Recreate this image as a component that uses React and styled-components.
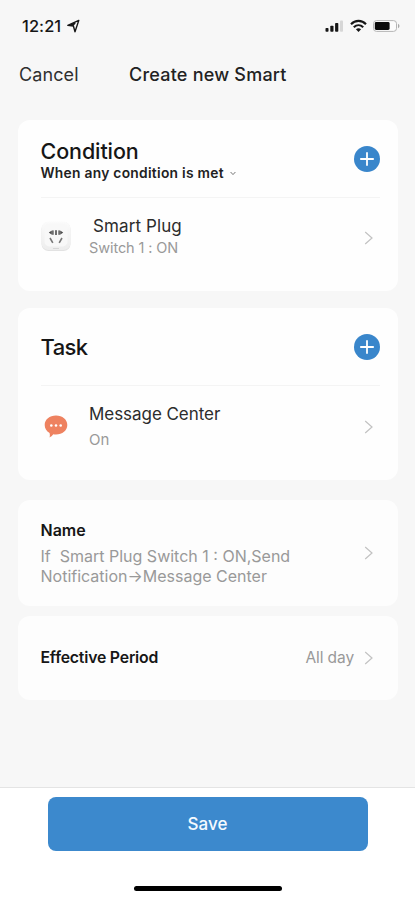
import React from "react";
import styled, { createGlobalStyle } from "styled-components";

const Chevron = () => (
  <ChevronIcon width="10" height="14" viewBox="0 0 10 14" fill="none">
    <path d="M1.2 1 L8 7 L1.2 13" stroke="#c2c2c2" strokeWidth="1.2" />
  </ChevronIcon>
);

const AddButton = () => (
  <Add aria-label="Add">
    <svg width="26" height="26" viewBox="0 0 26 26" fill="none">
      <path d="M13 6.2v13.6M6.2 13h13.6" stroke="#fff" strokeWidth="1.8" />
    </svg>
  </Add>
);

const StatusIcons = () => (
  <svg width="76" height="16" viewBox="0 0 76 16">
    <g fill="#161616">
      <rect x="0.5" y="10" width="3" height="3.8" rx="0.8" />
      <rect x="5.3" y="7.8" width="3.2" height="6" rx="0.8" />
      <rect x="10.1" y="5" width="3.2" height="8.8" rx="0.8" />
    </g>
    <rect x="15" y="2.5" width="3" height="11.3" rx="0.8" fill="#d6d6d6" />
    <g fill="none" stroke="#161616" strokeWidth="2.1">
      <path d="M26 6.2 C30.2 1.8 36.8 1.8 41 6.2" />
      <path d="M28.8 9.3 C31.6 6.5 35.4 6.5 38.2 9.3" />
    </g>
    <path d="M30.9 11.2 C32.4 9.8 34.6 9.8 36.1 11.2 L33.5 14 Z" fill="#161616" />
    <rect
      x="48.5"
      y="2.6"
      width="23"
      height="10.8"
      rx="3"
      fill="#fcfcfc"
      stroke="#b5b5b5"
    />
    <rect x="49.8" y="4" width="14.8" height="8" rx="1.4" fill="#0a0a0a" />
    <path d="M73 5.8 C75 6.7 75 9.3 73 10.2 Z" fill="#a8a8a8" />
  </svg>
);

const PlugIcon = () => (
  <svg width="32" height="32" viewBox="0 0 32 32">
    <defs>
      <linearGradient id="plug" x1="0" y1="0" x2="0" y2="1">
        <stop offset="0" stopColor="#fbfbfb" />
        <stop offset="1" stopColor="#ededed" />
      </linearGradient>
    </defs>
    <rect x="0.5" y="2" width="29" height="29" rx="7" fill="#e2e2e2" />
    <rect x="0.5" y="1.5" width="29" height="28.5" rx="7" fill="url(#plug)" />
    <rect x="3.5" y="3.5" width="23" height="23" rx="5" fill="#f8f8f8" />
    <g fill="#4c4c4c">
      <path d="M7.8 12.6 L10.8 10.4 V14.8 Z" />
      <rect x="11.2" y="10.4" width="1.4" height="4.4" />
      <rect x="14.2" y="10.2" width="1.6" height="4.8" />
      <rect x="17.4" y="10.4" width="1.4" height="4.4" />
      <path d="M22.2 12.6 L19.2 10.4 V14.8 Z" />
    </g>
    <path
      d="M9 18 L11.8 22.8 M21 18 L18.2 22.8"
      stroke="#777"
      strokeWidth="1.6"
    />
    <path d="M12 28.5h6" stroke="#cfcfcf" strokeWidth="0.8" />
  </svg>
);

const MessageIcon = () => (
  <svg width="32" height="32" viewBox="0 0 32 32">
    <path
      d="M15 4.5 C21.4 4.5 26.3 8.5 26.3 14 C26.3 19.5 21.4 23.5 15 23.5 C14 23.5 13.2 23.4 12.3 23.2 C11.2 24.7 10 25.7 8.6 26.4 C9 24.8 9 23.3 8.6 21.9 C5.4 20.2 3.7 17.4 3.7 14 C3.7 8.5 8.6 4.5 15 4.5 Z"
      fill="#ee8260"
    />
    <g fill="#fff">
      <circle cx="10.3" cy="14.5" r="1.3" />
      <circle cx="15" cy="14.5" r="1.3" />
      <circle cx="19.7" cy="14.5" r="1.3" />
    </g>
  </svg>
);

function App() {
  return (
    <>
      <GlobalStyle />
      <Screen>
        <StatusBar>
          <Clock>
            <Text $size={16.4} $weight={500} $spacing={0.1}>
              12:21
            </Text>
            <svg width="14" height="14" viewBox="0 0 14 14">
              <path
                d="M12.8 1.4 L9 12.8 L7.4 7 L1.8 6.4 Z"
                fill="none"
                stroke="#161616"
                strokeWidth="1.4"
                strokeLinejoin="round"
              />
              <path d="M7.4 7 L1.8 6.4 L9 3.2 L9.6 4.6 Z" fill="#161616" />
            </svg>
          </Clock>
          <StatusIcons />
        </StatusBar>

        <NavBar>
          <Text $size={18} $spacing={0.1} $color="#303030">
            Cancel
          </Text>
          <Title $size={18} $weight={500} $spacing={0.22} $color="#222">
            Create new Smart
          </Title>
        </NavBar>

        <Content>
          <Card $height={171}>
            <CardHeader $height={77} $top={1}>
              <Heading>
                <Text
                  as="h2"
                  $size={21.5}
                  $weight={500}
                  $line={24}
                  $spacing={-0.1}
                >
                  Condition
                </Text>
                <Match>
                  <Text
                    $size={13.8}
                    $weight={600}
                    $line={20}
                    $spacing={0.28}
                    $color="#222"
                  >
                    When any condition is met
                  </Text>
                  <svg width="6" height="5" viewBox="0 0 6 5" fill="none">
                    <path d="M0.6 1 L3 3.6 L5.4 1" stroke="#777" />
                  </svg>
                </Match>
              </Heading>
              <AddButton />
            </CardHeader>
            <Item $top={16}>
              <IconBox>
                <PlugIcon />
              </IconBox>
              <ItemBody>
                <ItemName $indent={4} $size={17} $line={24} $spacing={0.1}>
                  Smart Plug
                </ItemName>
                <Text $size={14.5} $line={20} $color="#999" $spacing={-0.1}>
                  Switch 1 : ON
                </Text>
              </ItemBody>
              <ChevronSlot $drop={4}>
                <Chevron />
              </ChevronSlot>
            </Item>
          </Card>

          <Card $height={172} $top={17}>
            <CardHeader $height={77} $top={1}>
              <Text
                as="h2"
                $size={22}
                $weight={500}
                $line={26}
                $spacing={-0.6}
              >
                Task
              </Text>
              <AddButton />
            </CardHeader>
            <Item $top={15}>
              <IconBox>
                <MessageIcon />
              </IconBox>
              <ItemBody>
                <ItemName $size={17} $line={26} $spacing={-0.05}>
                  Message Center
                </ItemName>
                <Text $size={15} $line={26} $color="#999">
                  On
                </Text>
              </ItemBody>
              <Chevron />
            </Item>
          </Card>

          <RowCard $height={106} $top={20}>
            <div>
              <Text as="h3" $size={16} $weight={600} $line={20}>
                Name
              </Text>
              <Summary $size={16} $line={20} $color="#999">
                {"If  Smart Plug Switch 1 : ON,Send\nNotification→Message Center"}
              </Summary>
            </div>
            <Chevron />
          </RowCard>

          <RowCard $height={84} $top={10}>
            <Text
              as="h3"
              $size={15.8}
              $weight={600}
              $line={20}
              $spacing={-0.2}
            >
              Effective Period
            </Text>
            <Value>
              <Text $size={15.5} $line={20} $color="#999" $spacing={-0.1}>
                All day
              </Text>
              <Chevron />
            </Value>
          </RowCard>
        </Content>

        <Footer>
          <SaveButton>Save</SaveButton>
          <HomeIndicator />
        </Footer>
      </Screen>
    </>
  );
}

export default App;

const GlobalStyle = createGlobalStyle`
  * {
    box-sizing: border-box;
  }
  body {
    margin: 0;
    background: #f7f7f7;
    font-family: Inter, "Liberation Sans", sans-serif;
  }
`;

const Screen = styled.div`
  display: flex;
  flex-direction: column;
  width: 415px;
  height: 900px;
  overflow: hidden;
  background: #f7f7f7;
`;

const Text = styled.p`
  margin: 0;
  font-size: ${(p) => p.$size}px;
  font-weight: ${(p) => p.$weight || 400};
  line-height: ${(p) => (p.$line ? `${p.$line}px` : "22px")};
  letter-spacing: ${(p) => p.$spacing || 0}px;
  color: ${(p) => p.$color || "#161616"};
  white-space: pre;
`;

const StatusBar = styled.header`
  display: flex;
  align-items: center;
  justify-content: space-between;
  height: 52px;
  padding: 0 14px 0 22px;
`;

const Clock = styled.div`
  display: flex;
  align-items: center;
  gap: 5px;
`;

const NavBar = styled.nav`
  display: grid;
  grid-template-columns: 110px 1fr;
  align-items: center;
  height: 46px;
  padding: 0 19px;
`;

const Title = styled(Text).attrs({ as: "h1" })``;

const Content = styled.main`
  flex: 1;
  padding: 22px 17px 0 18px;
`;

const Card = styled.section`
  height: ${(p) => p.$height}px;
  margin-top: ${(p) => p.$top || 0}px;
  padding: 0 18px 0 22.5px;
  border-radius: 12px;
  background: #fefefe;
`;

const RowCard = styled(Card)`
  display: flex;
  align-items: center;
  justify-content: space-between;
  padding-right: 24px;
  background: #fdfdfd;
`;

const CardHeader = styled.div`
  display: flex;
  align-items: center;
  justify-content: space-between;
  height: ${(p) => p.$height + 1}px;
  padding-top: ${(p) => p.$top}px;
  border-bottom: 1px solid #f4f4f4;
`;

const Heading = styled.div`
  padding-top: 4px;
`;

const Match = styled.div`
  display: flex;
  align-items: center;
  gap: 6px;
`;

const Add = styled.button`
  display: flex;
  width: 26px;
  height: 26px;
  padding: 0;
  border: none;
  border-radius: 50%;
  background: #3986cb;
`;

const Item = styled.div`
  display: flex;
  align-items: center;
  padding: ${(p) => p.$top}px 6px 0 0;
`;

const IconBox = styled.div`
  display: flex;
  width: 48.5px;
`;

const ItemBody = styled.div`
  flex: 1;
`;

const ItemName = styled(Text)`
  padding-left: ${(p) => p.$indent || 0}px;
  color: #2c2c2c;
`;

const Summary = styled(Text)`
  margin-top: 6px;
`;

const Value = styled.div`
  display: flex;
  align-items: center;
  gap: 10px;
`;

const ChevronSlot = styled.div`
  display: flex;
  padding-top: ${(p) => p.$drop}px;
`;

const ChevronIcon = styled.svg`
  flex: none;
`;

const Footer = styled.footer`
  display: flex;
  flex-direction: column;
  align-items: center;
  height: 113px;
  padding-top: 9px;
  border-top: 1px solid #e4e4e4;
  background: #fff;
`;

const SaveButton = styled.button`
  width: 320px;
  height: 54px;
  border: none;
  border-radius: 8px;
  background: #3c89cd;
  color: #f4faff;
  font-family: inherit;
  font-size: 17px;
  font-weight: 500;
`;

const HomeIndicator = styled.div`
  width: 148px;
  height: 5px;
  margin-top: 35px;
  border-radius: 3px;
  background: #000;
`;
